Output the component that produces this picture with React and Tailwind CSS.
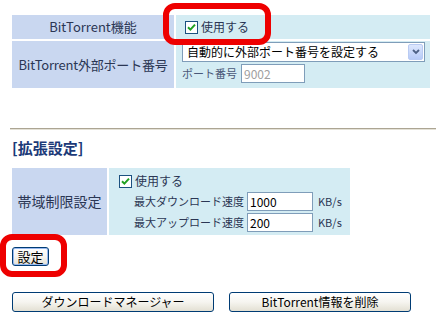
import React from 'react';

function Check() {
  return (
    <span className="inline-flex w-[13px] h-[13px] shrink-0 items-center justify-center border border-[#1c5180] bg-white">
      <svg width="9" height="9" viewBox="0 0 9 9">
        <path d="M1 4.2 L3.4 6.6 L8 1.6" stroke="#21a121" strokeWidth="2" fill="none" />
      </svg>
    </span>
  );
}

function XpButton({ className, children }) {
  return (
    <div className={`flex items-center justify-center whitespace-nowrap rounded-[3px] border border-[#003c74] bg-gradient-to-b from-white via-[#f6f5f0] to-[#e3e0d3] text-[12px] text-black ${className}`}>
      {children}
    </div>
  );
}

export default function App() {
  return (
    <div className="relative w-[436px] h-[318px] overflow-hidden whitespace-nowrap bg-white font-['Noto_Sans_CJK_JP',sans-serif] text-[#2b3654]">
      {/* BitTorrent settings */}
      <div className="pt-[15px] pl-[12px]">
        <div className="grid w-[418px] grid-cols-[162px_254px] gap-[2px]">
          <div className="flex h-[24px] items-center justify-center bg-[#c9d7f0] text-[13px]">BitTorrent機能</div>
          <div className="flex h-[24px] items-center gap-[3px] bg-[#d4ecf3] pl-[9px] text-[12px]">
            <Check />
            <span>使用する</span>
          </div>
          <div className="flex h-[47px] items-center justify-center bg-[#c9d7f0] text-[13px] tracking-[-0.2px]">BitTorrent外部ポート番号</div>
          <div className="flex h-[47px] flex-col bg-[#d4ecf3] pl-[6px] pt-[1px]">
            <div className="flex h-[20px] w-[243px] items-center justify-between border border-[#7f9db9] bg-white pl-[4px] pr-[1px] text-[12px] text-black">
              <span>自動的に外部ポート番号を設定する</span>
              <span className="flex h-[16px] w-[15px] items-center justify-center rounded-[2px] border border-[#b9cbf3] bg-gradient-to-b from-[#dde7fd] to-[#b7cbf7]">
                <svg width="8" height="6" viewBox="0 0 8 6">
                  <path d="M1 1 L4 4 L7 1" stroke="#4d6185" strokeWidth="1.8" fill="none" />
                </svg>
              </span>
            </div>
            <div className="mt-[2px] flex items-center gap-[4px] text-[11px] text-[#4a5878]">
              <span>ポート番号</span>
              <div className="flex h-[19px] w-[64px] items-center border border-[#7f9db9] bg-white pl-[2px] text-[12px] text-[#a0a0a0]">9002</div>
            </div>
          </div>
        </div>
      </div>

      <div className="ml-[10px] mt-[40px] h-[2px] border-t border-b border-t-[#aca593] border-b-[#e4e1d6]" />

      <div className="ml-[12px] mt-[8px] h-[20px] text-[15px] font-bold leading-[20px] text-[#1c3a78]">[拡張設定]</div>

      {/* Bandwidth */}
      <div className="ml-[12px] mt-[10px] grid w-[338px] grid-cols-[95px_241px] gap-[2px] text-[11px]">
        <div className="flex h-[67px] items-center justify-center bg-[#c9d7f0] text-[14px]">帯域制限設定</div>
        <div className="flex h-[67px] flex-col bg-[#d4ecf3] pl-[10px] pt-[4px]">
          <div className="flex h-[18px] items-center gap-[3px] text-[12px]">
            <Check />
            <span>使用する</span>
          </div>
          <div className="mt-[2px] flex items-center pl-[15px]">
            <span className="w-[113px]">最大ダウンロード速度</span>
            <div className="flex h-[19px] w-[66px] items-center border border-[#7f9db9] bg-white pl-[2px] text-[12px] text-black">1000</div>
            <span className="ml-[5px]">KB/s</span>
          </div>
          <div className="mt-[2px] flex items-center pl-[15px]">
            <span className="w-[113px]">最大アップロード速度</span>
            <div className="flex h-[19px] w-[66px] items-center border border-[#7f9db9] bg-white pl-[2px] text-[12px] text-black">200</div>
            <span className="ml-[5px]">KB/s</span>
          </div>
        </div>
      </div>

      <div className="ml-[12px] mt-[12px] flex">
        <XpButton className="h-[19px] w-[37px] text-[13px] shadow-[inset_0_0_0_1px_#97b8f0]">設定</XpButton>
      </div>

      <div className="ml-[12px] mt-[26px] flex gap-[15px]">
        <XpButton className="h-[20px] w-[202px]">ダウンロードマネージャー</XpButton>
        <XpButton className="h-[20px] w-[182px]">BitTorrent情報を削除</XpButton>
      </div>

      {/* red callouts */}
      <div className="absolute left-[163px] top-[3px] h-[42px] w-[108px] rounded-[12px] border-[6px] border-[#ee0000]" />
      <div className="absolute left-[0px] top-[234px] h-[43px] w-[67px] rounded-[12px] border-[6px] border-[#ee0000]" />
    </div>
  );
}
